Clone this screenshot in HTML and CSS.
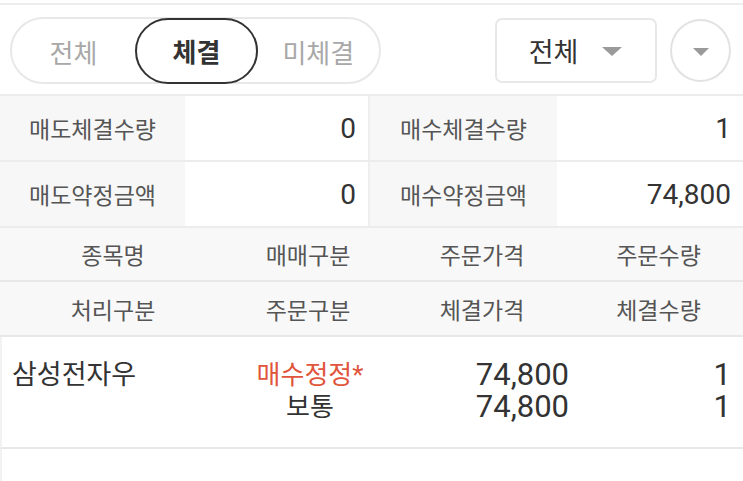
FILE: index.html
```html
<!DOCTYPE html>
<html lang="ko">
<head>
<meta charset="utf-8">
<link rel="stylesheet" href="styles.css">
</head>
<body>
<div class="topbar">
  <div class="segment">
    <span class="seg">전체</span>
    <span class="seg active">체결</span>
    <span class="seg">미체결</span>
  </div>
  <div class="select">
    <span>전체</span>
    <svg class="tri" width="20" height="9" viewBox="0 0 20 9"><path d="M0 0H20L10 9Z" fill="#9a9a9a"/></svg>
  </div>
  <div class="circle">
    <svg width="16" height="8" viewBox="0 0 16 8"><path d="M0 0H16L8 8Z" fill="#9a9a9a"/></svg>
  </div>
</div>

<div class="stats">
  <div class="srow">
    <div class="lbl">매도체결수량</div>
    <div class="val sep">0</div>
    <div class="lbl">매수체결수량</div>
    <div class="val">1</div>
  </div>
  <div class="srow">
    <div class="lbl">매도약정금액</div>
    <div class="val sep">0</div>
    <div class="lbl">매수약정금액</div>
    <div class="val">74,800</div>
  </div>
</div>

<div class="head">
  <div class="hrow">
    <div>종목명</div><div>매매구분</div><div>주문가격</div><div>주문수량</div>
  </div>
  <div class="hrow">
    <div>처리구분</div><div>주문구분</div><div>체결가격</div><div>체결수량</div>
  </div>
</div>

<div class="drow">
  <div class="c1">삼성전자우</div>
  <div class="c2"><span class="red">매수정정*</span><span>보통</span></div>
  <div class="c3"><span>74,800</span><span>74,800</span></div>
  <div class="c4"><span>1</span><span>1</span></div>
</div>
<div class="drow empty"></div>
</body>
</html>
```

FILE: styles.css
```css
* { box-sizing: border-box; }
html, body { margin: 0; padding: 0; background: #fff; }
body {
  width: 743px;
  height: 481px;
  overflow: hidden;
  font-family: Roboto, "Noto Sans CJK KR", sans-serif;
  color: #333;
}

.topbar {
  margin-top: 3px;
  border-top: 2px solid #ededed;
  border-bottom: 2px solid #ececec;
  padding: 12px 12px 11px 10px;
  display: flex;
  align-items: center;
  height: 93px;
}

.segment {
  width: 372px;
  height: 67px;
  border: 2px solid #e8e8e8;
  border-radius: 34px;
  display: grid;
  grid-template-columns: 123px 123px 1fr;
  align-items: center;
  margin-right: 114px;
}
.seg {
  display: flex;
  align-items: center;
  justify-content: center;
  height: 65px;
  font-family: "Noto Sans CJK KR", sans-serif;
  font-size: 26px;
  color: #a8a8a8;
}
.seg.active {
  border: 2px solid #333;
  border-radius: 33px;
  color: #333;
  font-weight: 700;
  height: 66px;
  margin-top: -1px;
}

.select {
  width: 163px;
  height: 65px;
  border: 2px solid #e8e8e8;
  border-radius: 7px;
  display: flex;
  align-items: center;
  padding-left: 32px;
  font-family: "Noto Sans CJK KR", sans-serif;
  font-size: 27px;
  color: #333;
}
.select .tri { margin-left: 24px; margin-top: 2px; }

.circle {
  width: 61px;
  height: 63px;
  margin-left: 13px;
  border: 2px solid #e2e2e2;
  border-radius: 50%;
  display: flex;
  align-items: center;
  justify-content: center;
}
.circle svg { margin-top: 4px; }

.srow {
  display: grid;
  grid-template-columns: 185px 185px 187px 1fr;
  height: 66px;
  border-bottom: 2px solid #ececec;
}
.lbl {
  background: #f7f7f7;
  display: flex;
  align-items: center;
  justify-content: center;
  font-size: 23px;
  color: #555;
}
.val {
  display: flex;
  align-items: center;
  justify-content: flex-end;
  padding-right: 12px;
  font-size: 28px;
  color: #333;
}
.val.sep { border-right: 2px solid #eeeeee; }

.head { background: #f8f8f8; }
.hrow {
  display: grid;
  grid-template-columns: 226px 164px 184px 1fr;
  border-bottom: 2px solid #e8e8e8;
  height: 54px;
}
.hrow:last-child { height: 55px; }
.hrow div {
  display: flex;
  align-items: center;
  justify-content: center;
  font-size: 23px;
  color: #555;
}

.drow {
  display: grid;
  grid-template-columns: 226px 164px 184px 1fr;
  height: 112px;
  border-bottom: 2px solid #e8e8e8;
  border-left: 2px solid #f2f2f2;
  padding-top: 22px;
  font-size: 26px;
  line-height: 32px;
  color: #333;
}
.drow.empty { height: 40px; border-bottom: none; padding: 0; }
.drow > div { display: flex; flex-direction: column; }
.c1 { padding-left: 10px; font-size: 27px; }
.c2 { align-items: center; font-size: 26px; }
.c3 { align-items: flex-end; padding-right: 7px; font-size: 31px; }
.c4 { align-items: flex-end; padding-right: 12px; font-size: 31px; }
.red { color: #e0553c; }
```
